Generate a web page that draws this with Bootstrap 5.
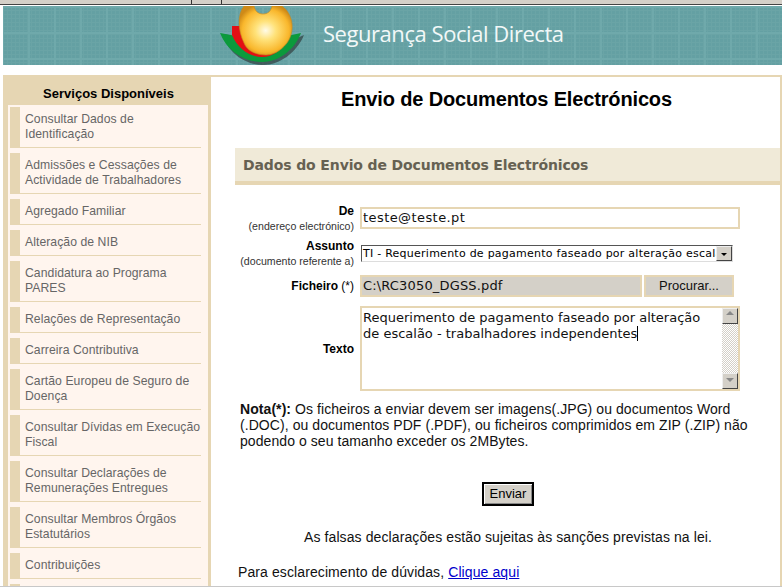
<!DOCTYPE html>
<html lang="pt">
<head>
<meta charset="utf-8">
<title>Segurança Social Directa</title>
<link rel="stylesheet" href="https://cdn.jsdelivr.net/npm/bootstrap@5.3.0/dist/css/bootstrap.min.css">
<style>
html,body{margin:0;height:587px;overflow:hidden;background:#fff}
body{font-family:"Liberation Sans",Arial,sans-serif;font-size:14px;color:#000}
.topstrip{height:5px;background:#d4d0c8;border-bottom:1px solid #444;display:flex}
.topstrip span{border-right:1px solid #333}
.topa{width:192px}.topb{width:30px}
.banner{margin:1px 0 0 3px;height:59px;background-color:#64a0a3;
 background-image:linear-gradient(#6fa9ab 2px,transparent 2px),linear-gradient(90deg,#6fa9ab 2px,transparent 2px),linear-gradient(#6aa4a6 1px,transparent 1px),linear-gradient(90deg,#6aa4a6 1px,transparent 1px);
 background-size:26px 26px,26px 26px,4px 4px,4px 4px;background-position:0 0,25px 0,0 0,0 0;
 display:flex;align-items:center;overflow:hidden}
.logo{margin-left:217px;flex:none}
.brand{margin-left:18px;color:#f2f8f8;font-family:"Open Sans","Noto Sans",sans-serif;font-size:22px;letter-spacing:-.45px;line-height:1;margin-bottom:5px;white-space:nowrap}
.shell{display:flex;margin:10px 0 0 3px;background:#e6d6b3;height:511px}
.side{width:208px;flex:none;overflow:hidden}
.side-title{font-weight:700;font-size:13px;text-align:center;height:30px;line-height:37px;padding-left:3px}
.side-list{background:#fff5ee;margin:0 3px 0 5px;padding:2px 0 0 2px;list-style:none;height:481px;overflow:hidden}
.side-list li{margin:0 7px 5px 0;border-bottom:1px solid #e6d6b3;border-left:10px solid #e6d6b3;padding:5px 0 5px 5px;color:#666;font-size:12.2px;letter-spacing:.06px;line-height:15px;white-space:nowrap}
.pane{flex:1;background:#fff;margin:2px 2px 0 0;min-width:0}
.pane-h{font-weight:700;font-size:20px;letter-spacing:-.15px;text-align:center;margin:0;padding:10px 0 0 22px;line-height:24px;height:71px}
.secbar{margin:0 0 0 24px;height:37px;background:#f0ead8;border-bottom:4px solid #e6d6b3;font-family:"DejaVu Sans",Verdana,sans-serif;font-weight:700;font-size:14px;line-height:35px;color:#666152;padding-left:8px;letter-spacing:-.12px}
.frm{margin-top:19px}
.lbl{width:143px;flex:none;text-align:right;font-size:12px;font-weight:700;line-height:14px}
.lbl small{display:block;font-weight:400;font-size:10.6px;line-height:16px;color:#333}
.lbl i{font-style:normal;font-weight:400}
.inp{font-family:"DejaVu Sans",Verdana,sans-serif;font-size:13px;border:2px solid #e6d6b3;background:#fff;color:#111;height:22px;padding:0 1px;line-height:18px;white-space:pre;overflow:hidden}
.inp-de{width:380px;margin-top:3px;letter-spacing:.42px}
.inp-file{width:282px;letter-spacing:.16px}
.pick{width:372px;height:17px;margin:6px 0 0 1px;background:#fff;border:1px solid;border-color:#555 #ddd #ddd #555;font-family:"DejaVu Sans",Verdana,sans-serif;font-size:11px;line-height:15px;padding:0 0 0 1px;position:relative;white-space:nowrap;overflow:hidden;letter-spacing:.25px}
.pick b{position:absolute;top:0;right:0;width:16px;height:15px;background:#d4d0c8;border:1px solid;border-color:#eee #444 #444 #eee}
.pick b::after{content:"";position:absolute;left:4px;top:6px;border:3px solid transparent;border-top:3px solid #000;border-bottom:0}
.gray{background:#d4d0c8}
.browse{width:90px;height:22px;margin-left:2px;background:#d4d0c8;border:2px solid #e6d6b3;font-size:13px;text-align:center;line-height:18px;color:#111}
.txt{position:relative;width:380px;height:85px;border:2px solid #e6d6b3;font-family:"DejaVu Sans",Verdana,sans-serif;font-size:13px;line-height:16px;padding:2px 20px 0 1px;color:#111;overflow:hidden}
.caret-mark{display:inline-block;width:1px;height:15px;background:#000;vertical-align:-3px}
.sb{position:absolute;right:0;top:0;bottom:0;width:16px;background:repeating-conic-gradient(#d4d0c8 0 25%,#fff 0 50%) 0 0/2px 2px}
.sb span{position:absolute;left:0;width:16px;height:16px;background:#d4d0c8;border:1px solid;border-color:#eee #444 #444 #eee}
.sb .u{top:0}.sb .d{bottom:0}
.sb .u::after,.sb .d::after{content:"";position:absolute;left:3px;border:4px solid transparent}
.sb .u::after{top:2px;border-bottom-color:#888;border-top:0}
.sb .d::after{top:4px;border-top-color:#888;border-bottom:0}
.note{margin:10px 0 0 29px;width:510px;font-size:14px;line-height:16px;letter-spacing:.07px;color:#111}
.sendwrap{margin-top:33px;padding-left:271px}
.sendbtn{display:block;width:52px;height:24px;padding:0;background:#d4d0c8;border:2px solid #000;box-shadow:inset 1px 1px 0 #fff,inset -1px -1px 0 #888;font-size:13px;line-height:18px;color:#000;text-align:center;border-radius:0}
.law{margin:23px 0 0 93px;font-size:14px;line-height:16px;letter-spacing:.1px;color:#111}
.help{margin:19px 0 0 27px;font-size:14px;line-height:16px;letter-spacing:.1px;color:#111}
.help a{color:#00c}
.rowf{display:flex;gap:6px}
.r2{margin-top:5px}.r3{margin-top:6px}.r4{margin-top:9px}
.baseline{height:1px;background:#c8c8c8}
</style>
</head>
<body>
<div class="topstrip"><span class="topa"></span><span class="topb"></span></div>
<header class="banner">
<svg class="logo" width="85" height="59" viewBox="0 0 85 59" role="img" aria-label="logo">
<defs>
<radialGradient id="sun" cx=".5" cy=".5" r=".55"><stop offset="0" stop-color="#fffbe8"/><stop offset=".35" stop-color="#ffe27a"/><stop offset=".8" stop-color="#f9b72c"/><stop offset="1" stop-color="#cf8a18"/></radialGradient>
</defs>
<path d="M3 28 C7 46 25 59 43 59 C60 59 77 46 84 29 L75 33 C68 48 55 55 42 55 C26 55 14 44 9 29Z" fill="#222" opacity=".55"/>
<path d="M0 27 L16 30 C22 42 32 49 42 49 C54 49 62 42 67 30 L81 27 C74 45 58 56 42 56 C24 56 7 45 0 27Z" fill="#0c9a3c"/>
<path d="M12 20 L21 20 C23 37 31 46 42 46 C53 46 60 37 62 20 L69 20 L69 29 C63 44 53 51 42 51 C30 51 18 43 12 29Z" fill="#e30f14"/>
<path d="M24 0 L34 0 C35 5 38 8 43 8 C48 8 51 5 52 0 L62 0 C74 9 75 26 67 37 C60 46 52 49 46 49 C36 49 27 45 24 37 C18 25 17 9 24 0Z" fill="url(#sun)" stroke="#c98a1c" stroke-width=".6"/>
</svg>
<span class="brand">Segurança Social Directa</span>
</header>
<div class="shell">
<nav class="side">
<div class="side-title">Serviços Disponíveis</div>
<ul class="side-list">
<li>Consultar Dados de<br>Identificação</li>
<li>Admissões e Cessações de<br>Actividade de Trabalhadores</li>
<li>Agregado Familiar</li>
<li>Alteração de NIB</li>
<li>Candidatura ao Programa<br>PARES</li>
<li>Relações de Representação</li>
<li>Carreira Contributiva</li>
<li>Cartão Europeu de Seguro de<br>Doença</li>
<li>Consultar Dívidas em Execução<br>Fiscal</li>
<li>Consultar Declarações de<br>Remunerações Entregues</li>
<li>Consultar Membros Órgãos<br>Estatutários</li>
<li>Contribuições</li>
<li>&nbsp;</li>
</ul>
</nav>
<main class="pane">
<h1 class="pane-h">Envio de Documentos Electrónicos</h1>
<div class="secbar">Dados do Envio de Documentos Electrónicos</div>
<form class="frm">
<div class="rowf"><div class="lbl">De<small>(endereço electrónico)</small></div><div class="inp inp-de">teste@teste.pt</div></div>
<div class="rowf r2"><div class="lbl">Assunto<small>(documento referente a)</small></div><div class="pick">TI - Requerimento de pagamento faseado por alteração escalão<b></b></div></div>
<div class="rowf r3 align-items-center"><div class="lbl">Ficheiro <i>(*)</i></div><div class="d-flex"><div class="inp gray inp-file">C:\RC3050_DGSS.pdf</div><div class="browse">Procurar...</div></div></div>
<div class="rowf r4 align-items-center"><div class="lbl">Texto</div><div class="txt">Requerimento de pagamento faseado por alteração
de escalão - trabalhadores independentes<span class="caret-mark"></span><div class="sb"><span class="u"></span><span class="d"></span></div></div></div>
</form>
<p class="note"><b>Nota(*):</b> Os ficheiros a enviar devem ser imagens(.JPG) ou documentos Word (.DOC), ou documentos PDF (.PDF), ou ficheiros comprimidos em ZIP (.ZIP) não podendo o seu tamanho exceder os 2MBytes.</p>
<div class="sendwrap"><button type="button" class="sendbtn">Enviar</button></div>
<p class="law">As falsas declarações estão sujeitas às sanções previstas na lei.</p>
<p class="help">Para esclarecimento de dúvidas, <a href="#">Clique aqui</a></p>
</main>
</div>
<div class="baseline"></div>
</body>
</html>
